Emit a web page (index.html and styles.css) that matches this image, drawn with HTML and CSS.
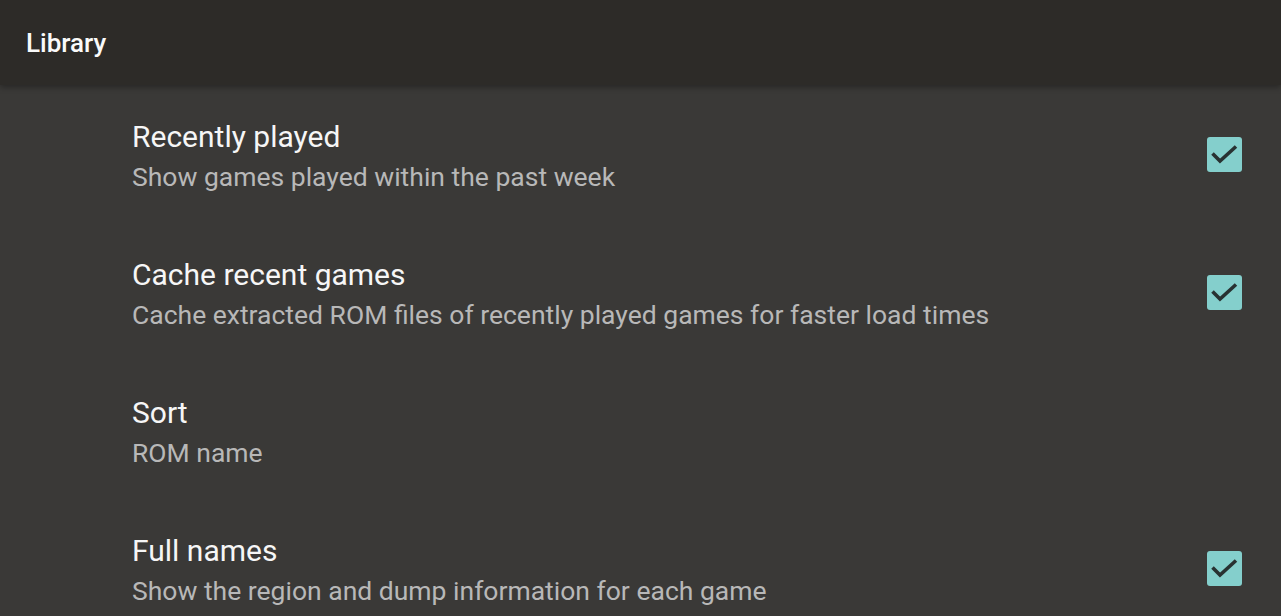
FILE: index.html
```html
<!DOCTYPE html>
<html>
<head>
<meta charset="utf-8">
<link rel="stylesheet" href="styles.css">
</head>
<body>
<header class="appbar"><h1 class="appbar-title">Library</h1></header>
<main class="list">
  <div class="row">
    <div class="text">
      <div class="title">Recently played</div>
      <div class="summary">Show games played within the past week</div>
    </div>
    <span class="check"><svg viewBox="0 0 35 35"><path d="M5.5 16.5L13 24L29 9.5" fill="none" stroke="#283232" stroke-width="3.6"/></svg></span>
  </div>
  <div class="row">
    <div class="text">
      <div class="title">Cache recent games</div>
      <div class="summary">Cache extracted ROM files of recently played games for faster load times</div>
    </div>
    <span class="check"><svg viewBox="0 0 35 35"><path d="M5.5 16.5L13 24L29 9.5" fill="none" stroke="#283232" stroke-width="3.6"/></svg></span>
  </div>
  <div class="row">
    <div class="text">
      <div class="title">Sort</div>
      <div class="summary">ROM name</div>
    </div>
  </div>
  <div class="row">
    <div class="text">
      <div class="title">Full names</div>
      <div class="summary">Show the region and dump information for each game</div>
    </div>
    <span class="check"><svg viewBox="0 0 35 35"><path d="M5.5 16.5L13 24L29 9.5" fill="none" stroke="#283232" stroke-width="3.6"/></svg></span>
  </div>
</main>
</body>
</html>
```

FILE: styles.css
```css
html, body {
  margin: 0;
  padding: 0;
  height: 100%;
  overflow: hidden;
}
body {
  background: #3a3937;
  font-family: Roboto, "Noto Sans", sans-serif;
}
.appbar {
  height: 85px;
  background: #2d2b28;
  display: flex;
  align-items: center;
  padding-left: 26px;
  box-shadow: 0 2px 6px rgba(0,0,0,0.35);
  position: relative;
  z-index: 1;
}
.appbar-title {
  margin: 0;
  font-size: 26px;
  font-weight: 500;
  color: #fafafa;
}
.row {
  height: 138px;
  display: flex;
  align-items: center;
  padding-left: 132px;
  padding-right: 39px;
}
.text {
  flex: 1;
  padding-top: 7px;
}
.title {
  font-size: 30px;
  line-height: 38px;
  color: #f6f6f6;
}
.summary {
  font-size: 26.5px;
  line-height: 42px;
  color: #b8b8b8;
}
.check {
  width: 35px;
  height: 35px;
  border-radius: 3px;
  background: #84cfcc;
  display: flex;
}
.check svg {
  width: 35px;
  height: 35px;
}
```
